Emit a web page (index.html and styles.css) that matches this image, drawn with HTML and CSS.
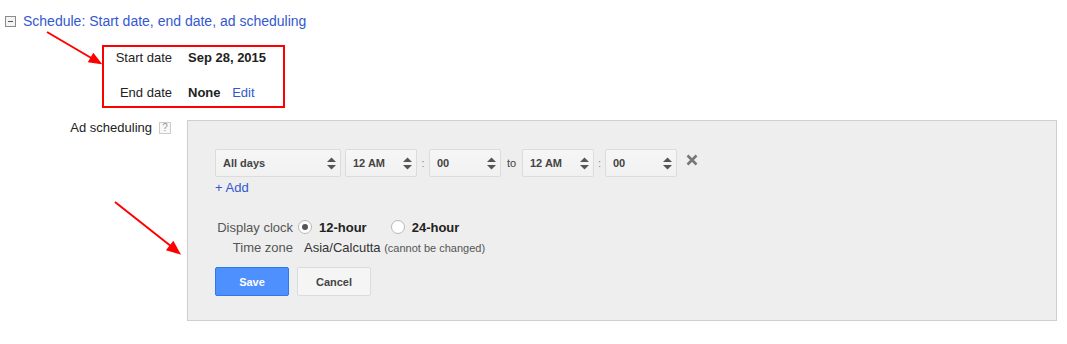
FILE: index.html
```html
<!DOCTYPE html>
<html lang="en">
<head>
    <meta charset="UTF-8">
    <title>Schedule</title>
    <link rel="stylesheet" href="styles.css">
</head>
<body>
    <div class="section-head">
        <span class="toggle"></span>
        <a class="link head-link">Schedule: Start date, end date, ad scheduling</a>
    </div>

    <div class="dates">
        <span class="label">Start date</span>
        <span class="value">Sep 28, 2015</span>
        <span class="label">End date</span>
        <span class="value">None <a class="link edit">Edit</a></span>
    </div>

    <div class="sched-row">
        <div class="sched-label">
            <span>Ad scheduling</span>
            <span class="help">?</span>
        </div>
        <div class="panel">
            <div class="time-row">
                <div class="select w-days"><span>All days</span><svg class="updown" width="9" height="13" viewBox="0 0 9 13"><polygon points="0,5 4.5,0.5 9,5"/><polygon points="0,8 4.5,12.5 9,8"/></svg></div>
                <div class="select w-time gap-first"><span>12 AM</span><svg class="updown" width="9" height="13" viewBox="0 0 9 13"><polygon points="0,5 4.5,0.5 9,5"/><polygon points="0,8 4.5,12.5 9,8"/></svg></div>
                <span class="sep colon">:</span>
                <div class="select w-time"><span>00</span><svg class="updown" width="9" height="13" viewBox="0 0 9 13"><polygon points="0,5 4.5,0.5 9,5"/><polygon points="0,8 4.5,12.5 9,8"/></svg></div>
                <span class="sep to">to</span>
                <div class="select w-time"><span>12 AM</span><svg class="updown" width="9" height="13" viewBox="0 0 9 13"><polygon points="0,5 4.5,0.5 9,5"/><polygon points="0,8 4.5,12.5 9,8"/></svg></div>
                <span class="sep colon2">:</span>
                <div class="select w-time"><span>00</span><svg class="updown" width="9" height="13" viewBox="0 0 9 13"><polygon points="0,5 4.5,0.5 9,5"/><polygon points="0,8 4.5,12.5 9,8"/></svg></div>
                <svg class="remove" width="12" height="12" viewBox="0 0 12 12"><path d="M1.5 1.5 L10.5 10.5 M10.5 1.5 L1.5 10.5"/></svg>
            </div>
            <a class="link add">+ Add</a>

            <div class="clock">
                <span class="clock-label">Display clock</span>
                <div class="radios">
                    <span class="radio checked"></span><span class="radio-text">12-hour</span>
                    <span class="radio second"></span><span class="radio-text">24-hour</span>
                </div>
                <span class="clock-label">Time zone</span>
                <span class="tz">Asia/Calcutta <small>(cannot be changed)</small></span>
            </div>

            <div class="buttons">
                <button class="btn btn-save">Save</button>
                <button class="btn btn-cancel">Cancel</button>
            </div>
        </div>
    </div>

    <!-- flechas rojas de anotacion -->
    <svg class="notes" width="1067" height="344" viewBox="0 0 1067 344">
        <line x1="47" y1="32" x2="93" y2="59"/>
        <polygon points="100,63 89.4,61.4 93.4,54.5"/>
        <line x1="115" y1="202" x2="172" y2="247"/>
        <polygon points="179,253 167.6,249.6 173.2,242.6"/>
    </svg>
</body>
</html>
```

FILE: styles.css
```css
body {
    margin: 0;
    position: relative;
    background-color: #fff;
    font-family: "Liberation Sans", Arial, sans-serif;
    font-size: 13px;
    color: #222;
}
.link {
    color: #3358d0;
    text-decoration: none;
    cursor: pointer;
}
.section-head {
    display: flex;
    align-items: center;
    gap: 7px;
    padding: 12px 0 0 5px;
    line-height: 18px;
}
.head-link {
    font-size: 14px;
}
.toggle {
    position: relative;
    width: 11px;
    height: 11px;
    box-sizing: border-box;
    border: 1px solid #8a8a8a;
    background-color: #f4f4f4;
}
.toggle::after {
    content: "";
    position: absolute;
    left: 2px;
    right: 2px;
    top: 4px;
    height: 1px;
    background-color: #555;
}
.dates {
    margin: 15px 0 0 102px;
    width: 183px;
    box-sizing: border-box;
    border: 2px solid #f00;
    padding: 3px 0 5px;
    display: grid;
    grid-template-columns: 68px auto;
    column-gap: 16px;
    row-gap: 19px;
    line-height: 16px;
}
.dates .label {
    text-align: right;
}
.dates .value {
    font-weight: bold;
}
.edit {
    font-weight: normal;
    margin-left: 8px;
}
.sched-row {
    display: flex;
    align-items: flex-start;
    margin-top: 12px;
}
.sched-label {
    width: 187px;
    box-sizing: border-box;
    padding-right: 16px;
    display: flex;
    justify-content: flex-end;
    align-items: center;
    gap: 7px;
    line-height: 16px;
}
.help {
    width: 12px;
    height: 12px;
    box-sizing: border-box;
    border: 1px solid #ccc;
    background-color: #f8f8f8;
    color: #999;
    font-size: 10px;
    line-height: 10px;
    text-align: center;
}
.panel {
    flex: 1;
    margin-right: 10px;
    background-color: #eeeeee;
    border: 1px solid #cfcfcf;
    padding: 28px 27px 24px;
}
.time-row {
    display: flex;
    align-items: center;
}
.select {
    height: 28px;
    box-sizing: border-box;
    display: flex;
    align-items: center;
    justify-content: space-between;
    padding: 0 4px 0 7px;
    border: 1px solid #dcdcdc;
    border-radius: 2px;
    background: linear-gradient(#f6f6f6, #f1f1f1);
    font-size: 11px;
    font-weight: bold;
    color: #444;
}
.w-days { width: 126px; }
.w-time { width: 72px; }
.gap-first { margin-left: 4px; }
.updown {
    fill: #555;
}
.sep {
    font-size: 11px;
    color: #888;
    text-align: center;
}
.colon { width: 12px; }
.to { width: 21px; color: #444; }
.colon2 { width: 11px; }
.remove {
    margin-left: 9px;
    margin-top: -6px;
    stroke: #777;
    stroke-width: 2.6;
}
.add {
    display: block;
    margin-top: 3px;
    line-height: 16px;
}
.clock {
    margin-top: 22px;
    display: grid;
    grid-template-columns: 78px auto;
    column-gap: 5px;
    row-gap: 2px;
    grid-auto-rows: 18px;
    align-items: center;
}
.clock-label {
    text-align: right;
    color: #555;
}
.radios {
    display: flex;
    align-items: center;
}
.radio {
    position: relative;
    width: 14px;
    height: 14px;
    box-sizing: border-box;
    border: 1px solid #b8b8b8;
    border-radius: 50%;
    background-color: #fff;
}
.radio.checked::after {
    content: "";
    position: absolute;
    left: 3px;
    top: 3px;
    width: 6px;
    height: 6px;
    border-radius: 50%;
    background-color: #555;
}
.radio.second {
    margin-left: 24px;
}
.radio-text {
    margin-left: 7px;
    font-weight: bold;
    color: #222;
}
.tz {
    margin-left: 6px;
    color: #333;
}
.tz small {
    font-size: 11px;
    color: #555;
}
.buttons {
    display: flex;
    gap: 8px;
    margin-top: 11px;
}
.btn {
    width: 74px;
    height: 29px;
    box-sizing: border-box;
    border-radius: 2px;
    font-family: "Liberation Sans", Arial, sans-serif;
    font-size: 11px;
    font-weight: bold;
    cursor: pointer;
}
.btn-save {
    background-color: #4d90fe;
    border: 1px solid #3079ed;
    color: #fff;
}
.btn-cancel {
    background-color: #f5f5f5;
    border: 1px solid #dcdcdc;
    color: #444;
}
.notes {
    position: absolute;
    left: 0;
    top: 0;
    pointer-events: none;
    stroke: #f00;
    stroke-width: 2;
    fill: #f00;
}
```
